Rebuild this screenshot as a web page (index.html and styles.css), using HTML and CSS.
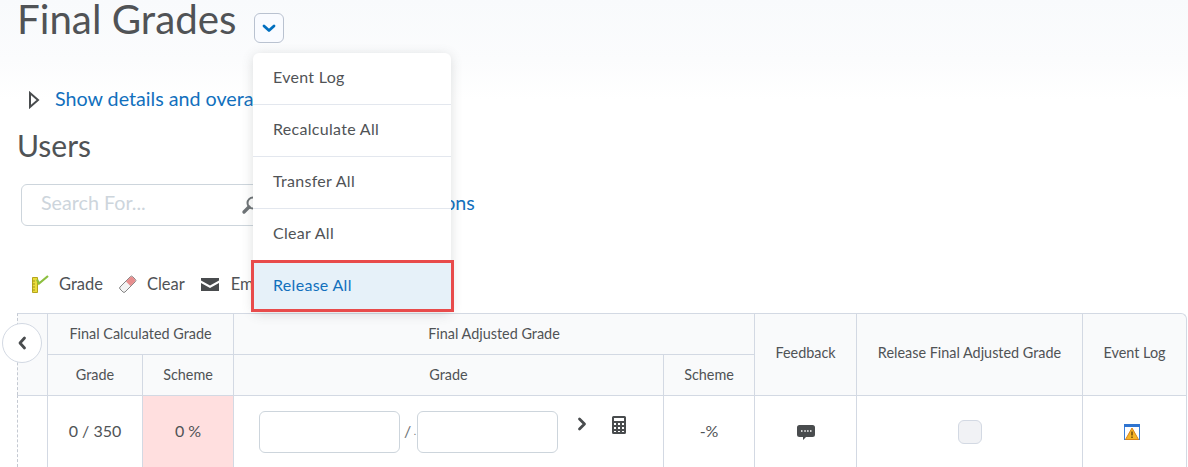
FILE: index.html
```html
<!DOCTYPE html>
<html lang="en">
<head>
<meta charset="utf-8">
<title>Final Grades</title>
<link rel="stylesheet" href="styles.css">
</head>
<body>
<div class="page">
  <header class="head">
    <h1 class="title">Final Grades</h1>
    <button class="ctx" type="button" aria-label="Actions">
      <svg width="14" height="9" viewBox="0 0 14 9"><path d="M2 2l5 4.500L12 2" fill="none" stroke="#006fbf" stroke-width="2.800" stroke-linecap="round" stroke-linejoin="round"/></svg>
    </button>
  </header>
  <div class="details">
    <svg class="tri" width="12" height="18" viewBox="0 0 12 18"><path d="M2 2l8 7-8 7z" fill="none" stroke="#494c4e" stroke-width="2"/></svg>
    <a class="link">Show details and overall statistics</a>
  </div>
  <h2 class="users">Users</h2>
  <div class="search-row">
    <div class="search">
      <span class="ph">Search For...</span>
      <svg class="mag" width="20" height="20" viewBox="0 0 20 20"><circle cx="12" cy="8" r="5.500" fill="none" stroke="#6e7376" stroke-width="2"/><path d="M8 12l-5 5" stroke="#6e7376" stroke-width="3.400" stroke-linecap="round"/></svg>
    </div>
    <a class="link opts">Show Search Options</a>
  </div>
  <div class="tools">
    <span class="tool">
      <svg width="18" height="18" viewBox="0 0 18 18"><path d="M1.500 2.500h5v15h-5z" fill="#eadc3c" stroke="#b5a51c"/><path d="M1.500 6h2.500M1.500 9h2.500M1.500 12h2.500M1.500 15h2.500" stroke="#a1921a"/><path d="M6 4.500l2 4L17 1" fill="none" stroke="#8cbf3f" stroke-width="2.200"/></svg>
      Grade
    </span>
    <span class="tool">
      <svg width="18" height="18" viewBox="0 0 18 18"><path d="M1 12L11.500 1.500a1.500 1.500 0 0 1 2 0l3 3a1.500 1.500 0 0 1 0 2L6 17a1.500 1.500 0 0 1-2 0l-3-3a1.500 1.500 0 0 1 0-2z" fill="#f3f3f3" stroke="#858585"/><path d="M7 6.500l4.500-4.500a1.500 1.500 0 0 1 2 0l2.500 2.500a1.500 1.500 0 0 1 0 2L11.500 11z" fill="#e78d8d"/></svg>
      Clear
    </span>
    <span class="tool mail">
      <svg width="18" height="13" viewBox="0 0 18 13"><path d="M0 0h18v2.500L9 7.500 0 2.500zM0 5l9 5 9-5v8H0z" fill="#494c4e"/></svg>
      Email
    </span>
  </div>
  <div class="table-wrap">
    <button class="collapse" type="button" aria-label="Collapse">
      <svg width="10" height="14" viewBox="0 0 10 14"><path d="M7.500 2L3 7l4.500 5" fill="none" stroke="#494c4e" stroke-width="2.800" stroke-linecap="round" stroke-linejoin="round"/></svg>
    </button>
    <table class="grades">
      <colgroup>
        <col class="c0"><col class="c1"><col class="c2"><col class="c3"><col class="c4"><col class="c5"><col class="c6"><col class="c7">
      </colgroup>
      <thead>
        <tr class="r1">
          <th rowspan="2" class="first"></th>
          <th colspan="2">Final Calculated Grade</th>
          <th colspan="2">Final Adjusted Grade</th>
          <th rowspan="2" class="tall">Feedback</th>
          <th rowspan="2" class="tall">Release Final Adjusted Grade</th>
          <th rowspan="2" class="tall last">Event Log</th>
        </tr>
        <tr class="r2">
          <th>Grade</th>
          <th>Scheme</th>
          <th>Grade</th>
          <th>Scheme</th>
        </tr>
      </thead>
      <tbody>
        <tr class="r3">
          <td class="first"></td>
          <td class="val">0 / 350</td>
          <td class="val pink">0 %</td>
          <td class="entry">
            <div class="entry-row">
              <span class="box"></span>
              <span class="slash">/</span>
              <span class="dot">.</span>
              <span class="box"></span>
              <svg class="chev" width="10" height="14" viewBox="0 0 10 14"><path d="M2.500 2L7.500 7l-5 5" fill="none" stroke="#494c4e" stroke-width="2.800" stroke-linecap="round" stroke-linejoin="round"/></svg>
              <svg class="calc" width="14" height="18" viewBox="0 0 14 18"><path fill-rule="evenodd" d="M1.500 0h11A1.500 1.500 0 0 1 14 1.500v15a1.500 1.500 0 0 1-1.500 1.500h-11A1.500 1.500 0 0 1 0 16.500v-15A1.500 1.500 0 0 1 1.500 0zM2 2v3h10V2zM2 7v2h2V7zm4 0v2h2V7zm4 0v2h2V7zM2 11v2h2v-2zm4 0v2h2v-2zm4 0v2h2v-2zM2 15v1h2v-1zm4 0v1h2v-1zm4 0v1h2v-1z" fill="#494c4e"/></svg>
            </div>
          </td>
          <td class="val">-%</td>
          <td>
            <svg class="bubble" width="18" height="16" viewBox="0 0 18 16"><path d="M2.500 0h13A2.500 2.500 0 0 1 18 2.500v7a2.500 2.500 0 0 1-2.500 2.500H9l-3 3v-3H2.500A2.500 2.500 0 0 1 0 9.500v-7A2.500 2.500 0 0 1 2.500 0z" fill="#494c4e"/><path d="M4 6h1.500M7.300 6h1.500M10.100 6h1.500M13 6h1.500" stroke="#fff" stroke-width="1.500"/></svg>
          </td>
          <td><span class="check"></span></td>
          <td class="last">
            <svg class="warn" width="16" height="16" viewBox="0 0 16 16"><rect x=".5" y=".5" width="15" height="15" fill="#fff" stroke="#3b7fd9"/><rect width="16" height="3" fill="#2f74d0"/><path d="M8 4l6.500 11.500h-13z" fill="#f5b528" stroke="#d9831c"/><path d="M8 7.500v4M8 12.500v1.500" stroke="#5a3a10" stroke-width="1.300"/></svg>
          </td>
        </tr>
      </tbody>
    </table>
  </div>
  <ul class="menu">
    <li class="item">Event Log</li>
    <li class="item">Recalculate All</li>
    <li class="item">Transfer All</li>
    <li class="item">Clear All</li>
    <li class="item active">Release All</li>
  </ul>
</div>
</body>
</html>
```
FILE: styles.css
```css
* { box-sizing: border-box; }
html, body { margin: 0; padding: 0; height: 100%; overflow: hidden; }
body { font-family: Lato, "Open Sans", sans-serif; color: #505356; background: #fff; }
.page { position: relative; height: 467px; overflow: hidden; background: linear-gradient(#f8fafc 0, #fbfcfd 60px, #fff 100px); }
.head { display: flex; align-items: flex-start; height: 82px; padding-left: 17px; }
.title { margin: 1px 0 0; font-size: 40.3px; line-height: 35px; font-weight: 400; }
.ctx { margin: 13px 0 0 17px; width: 30px; height: 30px; padding: 0; display: flex; align-items: center; justify-content: center; background: #f9fbff; border: 1px solid #b9c2d0; border-radius: 6px; }
.details { display: flex; align-items: center; height: 33px; padding-left: 28px; gap: 15px; }
.tri { flex: none; margin-top: 3px; }
.link { color: #1270bd; font-size: 19.7px; white-space: nowrap; }
.users { margin: 12px 0 0 17px; font-size: 30px; line-height: 36px; font-weight: 400; }
.search-row { display: flex; align-items: center; margin: 21px 0 0 21px; height: 42px; }
.search { position: relative; width: 240px; height: 42px; padding: 0 0 5px 19px; display: flex; align-items: center; background: #fff; border: 1px solid #cdd5dc; border-radius: 6px; font-size: 19.7px; flex: none; }
.ph { color: #cdd5dc; }
.mag { position: absolute; right: -1px; top: 10px; }
.opts { margin-left: 29px; padding-bottom: 5px; }
.tools { display: flex; align-items: center; height: 20px; margin: 48px 0 0 31px; gap: 16px; }
.tool { display: flex; align-items: center; gap: 10px; font-size: 16.5px; white-space: nowrap; }
.mail { gap: 12px; }
.table-wrap { position: relative; margin: 19px 0 0 17px; width: 1170px; }
.grades { width: 1170px; table-layout: fixed; border-collapse: separate; border-spacing: 0; font-size: 14.4px; text-align: center; }
.c0 { width: 30px; } .c1 { width: 95px; } .c2 { width: 91px; } .c3 { width: 430px; } .c4 { width: 91px; } .c5 { width: 102px; } .c6 { width: 226px; } .c7 { width: 105px; }
.grades th { font-weight: 400; background: #f9fafb; border-left: 1px solid #d3d9e3; border-top: 1px solid #d3d9e3; padding: 0 0 2px; }
.grades th.tall { padding-bottom: 4px; }
.grades td { border-left: 1px solid #d3d9e3; border-top: 1px solid #d3d9e3; padding: 0; font-size: 16px; }
.grades td.val { padding-bottom: 2px; }
.grades th.first, .grades td.first { border-left: 1px dashed #c4c9d2; }
.grades th.last { border-top-right-radius: 6px; border-right: 1px solid #d3d9e3; }
.grades td.last { border-right: 1px solid #d3d9e3; padding-right: 5px; }
.r1 { height: 41px; } .r2 { height: 41px; } .r3 { height: 72px; }
.grades td.pink { background: #ffdfdf; }
.entry-row { display: flex; align-items: flex-start; padding: 0 0 0 25px; height: 71px; }
.box { flex: none; width: 141px; height: 42px; margin-top: 15px; background: #fff; border: 1px solid #cdd5dc; border-radius: 6px; }
.slash { width: 5px; margin: 25px 0 0 4px; color: #6e7376; line-height: 20px; }
.dot { width: 4px; margin: 29px 0 0 4px; color: #6e7376; font-size: 10px; line-height: 12px; }
.chev { margin: 21px 0 0 19px; flex: none; }
.calc { margin: 20px 0 0 25px; flex: none; }
.bubble { display: block; margin: 3px auto 0; }
.check { display: block; width: 24px; height: 24px; margin: 1px auto 0; background: #f1f2f5; border: 1px solid #d3d9e3; border-radius: 6px; }
.warn { display: block; margin: 1px auto 0; }
.collapse { position: absolute; left: -15px; top: 10px; width: 40px; height: 40px; padding: 0; display: flex; align-items: center; justify-content: center; background: #fff; border: 1px solid #d3d9e3; border-radius: 50%; }
.menu { position: absolute; left: 253px; top: 53px; width: 198px; margin: 0; padding: 0; list-style: none; background: #fff; border-radius: 6px; box-shadow: 0 2px 12px rgba(86, 90, 92, .2); }
.item { height: 52px; padding: 0 0 4px 20px; display: flex; align-items: center; font-size: 16px; letter-spacing: .3px; border-bottom: 1px solid #e3e7ee; }
.item.active { margin: -1px -3px 0 -2px; height: 52px; padding: 0 0 4px 19px; background: #e6f1f9; color: #1270bd; border: 3px solid #e84b4b; }
```
